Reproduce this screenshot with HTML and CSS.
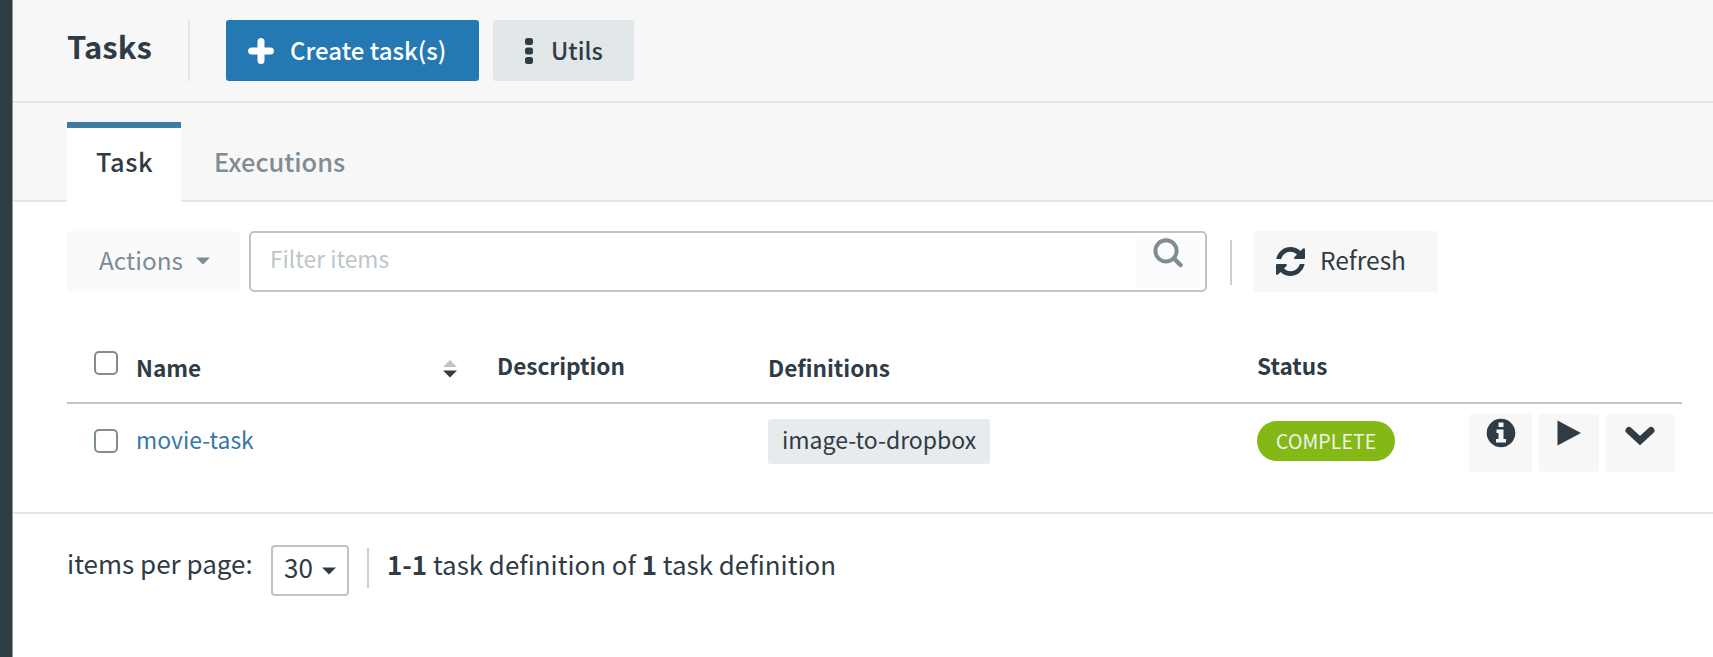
FILE: index.html
```html
<!DOCTYPE html>
<html lang="en">
<head>
<meta charset="utf-8">
<title>Tasks</title>
<link rel="stylesheet" href="styles.css">
</head>
<body>
<div class="app">
  <aside class="rail"></aside>
  <main class="main">
    <header class="header">
      <h1 class="title">Tasks</h1>
      <span class="header-divider"></span>
      <button class="btn btn-primary">
        <svg class="icon-plus" viewBox="0 0 26 26" width="26" height="26"><path d="M13 3.6V22.4M3.6 13H22.4" stroke="currentColor" stroke-width="7" stroke-linecap="round"/></svg>
        <span class="create-label">Create task(s)</span>
      </button>
      <button class="btn btn-utils">
        <svg viewBox="0 0 8 26" width="8" height="26" fill="currentColor"><rect x="0" y="0" width="8" height="7" rx="2.5"/><rect x="0" y="9.5" width="8" height="7" rx="2.5"/><rect x="0" y="19" width="8" height="7" rx="2.5"/></svg>
        <span class="utils-label">Utils</span>
      </button>
    </header>
    <nav class="tabs">
      <a class="tab tab-active">Task</a>
      <a class="tab">Executions</a>
    </nav>
    <section class="toolbar">
      <button class="btn btn-actions"><span class="actions-label">Actions</span><svg class="caret" viewBox="0 0 14 8" width="14" height="8"><path d="M0 0.5H14L7 7.5Z" fill="currentColor"/></svg></button>
      <div class="filter">
        <span class="filter-text">Filter items</span>
        <span class="search"><svg viewBox="0 0 30 30" width="30" height="30" fill="none" stroke="currentColor"><circle cx="13" cy="12.8" r="10.6" stroke-width="4"/><path d="M21 20.5L27.5 27" stroke-width="4.5" stroke-linecap="round"/></svg></span>
      </div>
      <span class="toolbar-divider"></span>
      <button class="btn btn-refresh">
        <svg viewBox="0 0 1536 1536" width="29" height="29" fill="currentColor"><path d="M1511 928q0 5-1 7-64 268-268 434.500T764 1536q-146 0-282.500-55T238 1324l-129 129q-19 19-45 19t-45-19-19-45V960q0-26 19-45t45-19h448q26 0 45 19t19 45-19 45l-137 137q71 66 161 102t187 36q134 0 250-65t186-179q11-17 53-117 8-23 30-23h192q13 0 22.500 9.500t9.500 22.500zM1536 128v448q0 26-19 45t-45 19h-448q-26 0-45-19t-19-45 19-45l138-138Q969 256 768 256q-134 0-250 65T332 500q-11 17-53 117-8 23-30 23H50q-13 0-22.500-9.500T18 608v-7q65-268 270-434.500T768 0q146 0 284 55.500T1297 212l130-129q19-19 45-19t45 19 19 45z"/></svg>
        <span class="refresh-label">Refresh</span>
      </button>
    </section>
    <section class="table">
      <div class="row head">
        <span class="cell-check"><i class="checkbox"></i></span>
        <span class="cell-name"><b class="th th-low">Name</b><svg class="sort" viewBox="0 0 14 18" width="14" height="18"><path d="M0 7H14L7 0Z" fill="#bcc6ca"/><path d="M0 10.500H14L7 17.500Z" fill="#2f3b45"/></svg></span>
        <span class="cell-desc"><b class="th">Description</b></span>
        <span class="cell-def"><b class="th th-low">Definitions</b></span>
        <span class="cell-status"><b class="th">Status</b></span>
      </div>
      <div class="row body-row">
        <span class="cell-check"><i class="checkbox"></i></span>
        <span class="cell-name"><a class="link">movie-task</a></span>
        <span class="cell-desc"></span>
        <span class="cell-def"><span class="tag">image-to-dropbox</span></span>
        <span class="cell-status"><span class="pill">COMPLETE</span></span>
        <span class="row-actions">
          <button class="act act-info"><svg viewBox="0 0 30 30" width="30" height="30"><circle cx="15" cy="15" r="14.3" fill="currentColor"/><path d="M12.500 4.500h5v4.500h-5zM10.500 11.500h7v9.500h2.500v3.500h-10v-3.500h2.500v-6h-2z" fill="#f7f7f7"/></svg></button>
          <button class="act act-play"><svg viewBox="0 0 24 26" width="24" height="26"><path d="M0.500 0.500L24 13L0.500 25.500Z" fill="currentColor"/></svg></button>
          <button class="act act-more"><svg viewBox="0 0 30 20" width="30" height="20"><path d="M4 4.500L15 14.500L26 4.500" fill="none" stroke="currentColor" stroke-width="7" stroke-linecap="round"/></svg></button>
        </span>
      </div>
    </section>
    <footer class="footer">
      <span class="per-page">items per page:</span>
      <span class="select"><span class="select-label">30</span><svg class="caret" viewBox="0 0 14 8" width="14" height="8"><path d="M0 0.500H14L7 7.500Z" fill="currentColor"/></svg></span>
      <span class="footer-divider"></span>
      <span class="summary"><b>1-1</b> task definition of <b>1</b> task definition</span>
    </footer>
  </main>
</div>
</body>
</html>
```

FILE: styles.css
```css
* { box-sizing: border-box; }
body {
  margin: 0;
  background: #fff;
  color: #2f3b45;
  font-family: "Noto Sans CJK SC", "Noto Sans", sans-serif;
  font-size: 25px;
  line-height: 36px;
}
svg { display: block; flex: none; }
span, b, a { white-space: nowrap; }
.app { display: flex; height: 657px; overflow: hidden; }
.rail { flex: none; width: 13px; background: #2f3b45; border-right: 1px solid #8b959c; }
.main { flex: 1; min-width: 0; }
.btn {
  display: flex;
  align-items: center;
  flex: none;
  border: 0;
  border-radius: 3px;
  color: inherit;
  font: inherit;
  text-align: left;
}

.header {
  display: flex;
  align-items: flex-start;
  height: 103px;
  padding-left: 54px;
  background: #f7f7f7;
  border-bottom: 2px solid #e1e6e9;
}
.title { flex: none; width: 121px; margin: 26px 0 0; font-size: 31px; line-height: 40px; font-weight: 700; }
.header-divider { width: 2px; height: 62px; margin: 19px 36px 0 0; background: #e1e6e9; }
.btn-primary { width: 253px; height: 61px; margin: 20px 14px 0 0; padding: 0 0 0 22px; background: #2479b3; color: #fff; font-weight: 500; }
.create-label { margin: 0 0 2px 16px; font-size: 24px; }
.btn-utils { width: 141px; height: 61px; margin-top: 20px; padding: 0 0 0 32px; background: #e1e6e9; }
.utils-label { margin: 0 0 2px 18px; font-size: 23.6px; font-weight: 500; }

.tabs {
  display: flex;
  align-items: flex-end;
  height: 99px;
  padding-left: 54px;
  background: linear-gradient(#e1e6e9, #e1e6e9) bottom / 100% 2px no-repeat #f7f7f7;
}
.tab { height: 80px; padding-top: 21px; padding-left: 33px; color: #7f8c93; font-size: 25.4px; font-weight: 500; }
.tab-active { width: 114px; padding-left: 29px; padding-top: 15px; border-top: 6px solid #3e7b9f; background: #fff; color: #2f3b45; letter-spacing: 0.6px; }

.toolbar { display: flex; align-items: flex-start; height: 90px; padding: 29px 0 0 54px; }
.btn-actions { width: 173px; height: 60px; padding: 0 0 0 32px; background: #fafafa; color: #7f8c93; }
.actions-label { width: 97px; margin-bottom: 2px; font-size: 24.4px; }
.filter {
  display: flex;
  justify-content: space-between;
  width: 958px;
  height: 61px;
  margin-left: 9px;
  padding: 3px 5px 0 19px;
  border: 2px solid #bcc6ca;
  border-radius: 5px;
}
.filter-text { margin-top: 5px; color: #bcc6ca; font-size: 22.8px; }
.search { width: 65px; height: 52px; padding: 2px 0 0 18px; background: #fcfcfc; color: #7f8c93; }
.toolbar-divider { width: 2px; height: 45px; margin: 9px 22px 0 23px; background: #c7d0d4; }
.btn-refresh { width: 184px; height: 61px; padding: 0 0 0 22px; background: #f7f7f7; }
.refresh-label { margin: 0 0 3px 15px; font-size: 24.5px; }

.table { height: 222px; padding: 40px 31px 0 54px; border-bottom: 2px solid #e1e6e9; }
.row { display: grid; grid-template-columns: 69px 361px 271px 489px 212px 1fr; }
.head { height: 72px; border-bottom: 2px solid #bcc6ca; }
.cell-check { padding-left: 27px; }
.checkbox { display: block; width: 24px; height: 24px; margin-top: 19px; border: 2px solid #7f8c93; border-radius: 5px; }
.body-row .checkbox { margin-top: 25px; }
.cell-name { display: flex; }
.th { display: block; margin-top: 16px; font-size: 22.6px; font-weight: 700; }
.th-low { margin-top: 18px; }
.sort { margin: 28px 40px 0 auto; }
.link { margin-top: 17px; color: #3678a6; font-size: 22.9px; }
.tag { display: block; width: 222px; height: 45px; margin-top: 15px; padding: 2px 0 0 14px; border-radius: 3px; background: #e7ebed; font-size: 23px; }
.pill { display: block; width: 138px; height: 40px; margin-top: 17px; padding: 2px 0 0 19px; border-radius: 20px; background: #83b817; color: #f1f3ea; font-size: 19.4px; letter-spacing: 0.15px; }
.row-actions { display: flex; gap: 7px; margin-top: 10px; }
.act { display: flex; align-items: flex-start; flex: none; height: 58px; padding: 0; border: 0; border-radius: 3px; background: #f7f7f7; color: #2f3b45; }
.act-info { width: 63px; padding: 4px 0 0 17px; }
.act-play { width: 60px; padding: 6px 0 0 18px; }
.act-more { width: 69px; padding: 12px 0 0 19px; }

.footer { display: flex; align-items: flex-start; padding: 31px 0 0 54px; font-size: 26px; }
.per-page { width: 204px; }
.select { display: flex; align-items: flex-start; width: 78px; height: 51px; padding: 2px 0 0 11px; border: 2px solid #bcc6ca; border-radius: 4px; }
.select-label { width: 38px; }
.select .caret { margin-top: 18px; }
.footer-divider { width: 2px; height: 40px; margin: 3px 18px 0 18px; background: #c7d0d4; }
.summary { margin-top: 1px; font-size: 25.9px; }
```
